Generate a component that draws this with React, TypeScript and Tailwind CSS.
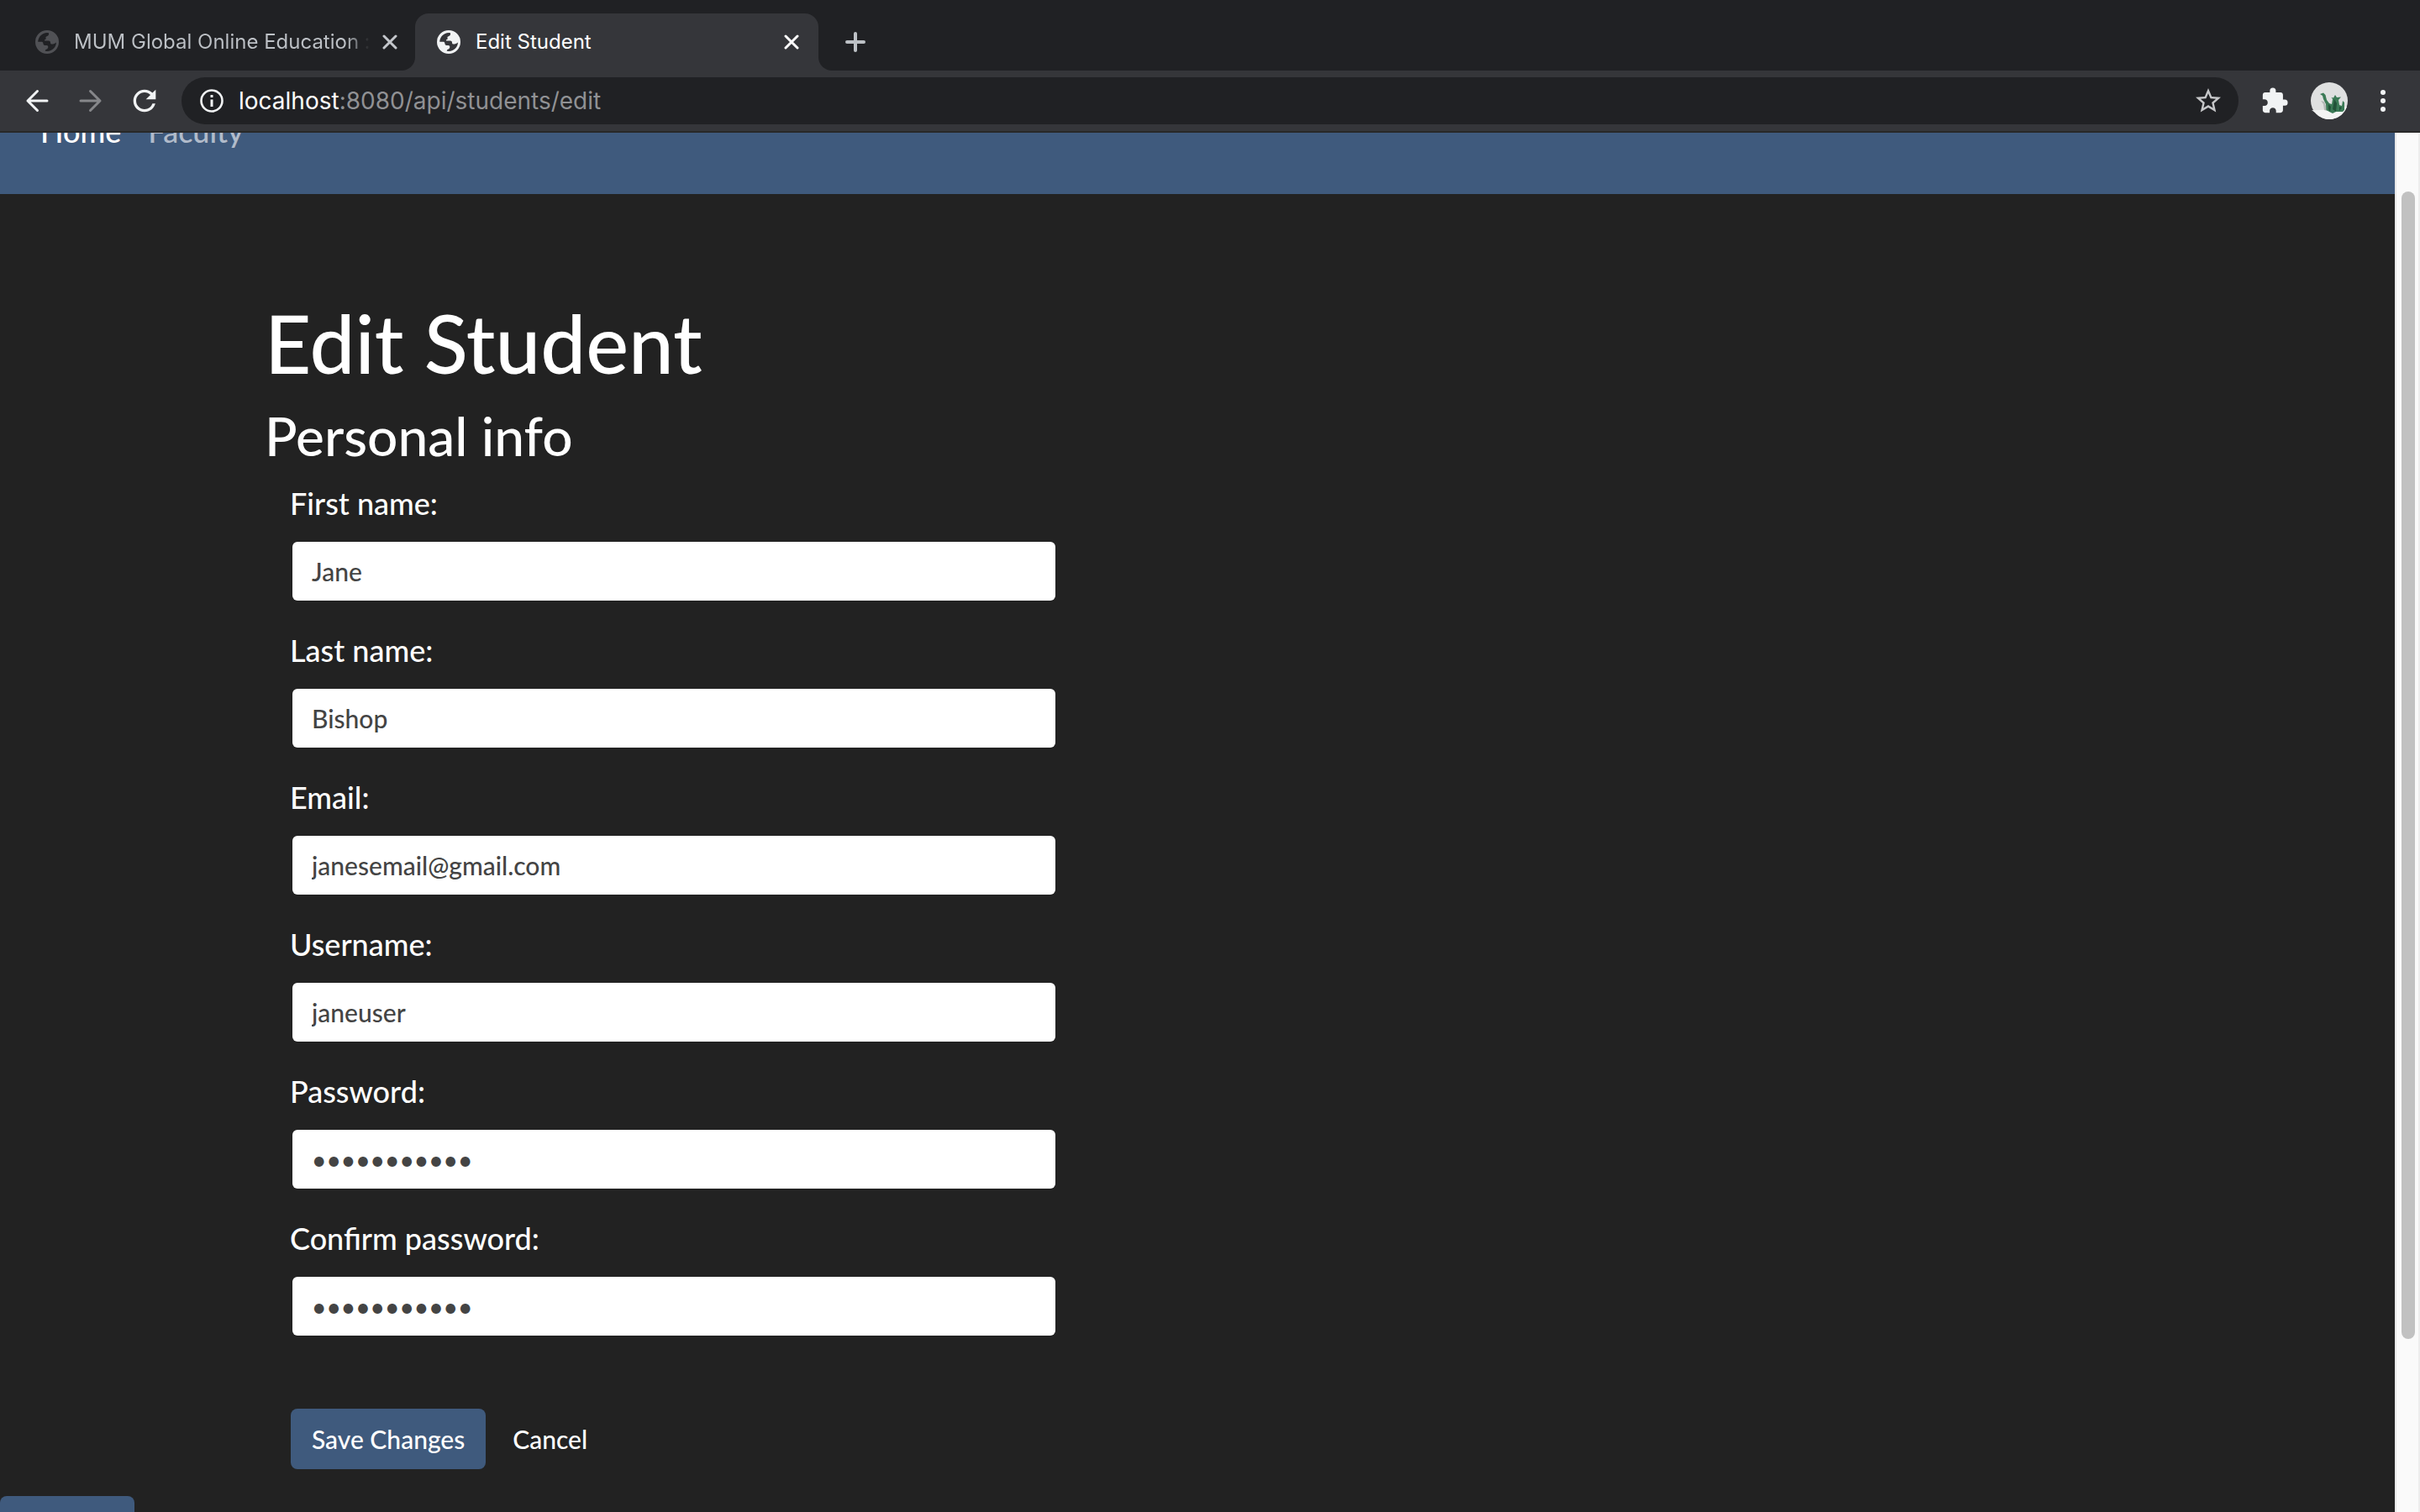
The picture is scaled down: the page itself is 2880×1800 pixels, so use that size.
import React from "react";
import { MdExtension, MdStarBorder, MdRefresh } from "react-icons/md";

const fields = [
  { id: "firstName", label: "First name:", type: "text", value: "Jane" },
  { id: "lastName", label: "Last name:", type: "text", value: "Bishop" },
  { id: "email", label: "Email:", type: "email", value: "janesemail@gmail.com" },
  { id: "username", label: "Username:", type: "text", value: "janeuser" },
  { id: "password", label: "Password:", type: "password", value: "janepasswor" },
  { id: "confirm", label: "Confirm password:", type: "password", value: "janepasswor" },
];

function GlobeIcon({ className }: { className: string }) {
  return (
    <svg viewBox="0 0 28 28" className={className} aria-hidden="true">
      <path
        fill="currentColor"
        fillRule="evenodd"
        d="M14 0a14 14 0 1 0 0 28a14 14 0 1 0 0-28zM16 3.200c.4 2-.4 3.300-1.900 3.800c-1.300.5-1.900 1-1.600 2.200c.2 1 .5 1.600-.7 1.700c-.9.1-1.100.8-.6 1.500h4.600c1.600 0 2.300 1 2.200 2.300c-.1 1.400 1 1.900 2.200 1.800c1.500-.1 2.800-.3 4.800-2c-.2 5.500-4.700 10.400-10.700 10.400l-2.500-.1c0-1.500.7-2 2-2.400c1.400-.5 1.900-2.700 1.200-3.600c-.6-.8-2.200-.6-3.500-.7c-1.500-.1-2-1.200-2.100-2.300c-.1-1.400-.8-2-2.200-2h-4c.3-5.600 4.900-10.700 10.700-10.700z"
      />
    </svg>
  );
}

function CloseIcon({ className }: { className: string }) {
  return (
    <svg viewBox="0 0 18 18" className={className} fill="none" stroke="currentColor" strokeWidth="3" strokeLinecap="round" aria-hidden="true">
      <path d="M2 2L16 16M16 2L2 16" />
    </svg>
  );
}

function Arrow({ className }: { className: string }) {
  return (
    <svg viewBox="0 0 28 28" className={className} fill="none" stroke="currentColor" strokeWidth="3" strokeLinecap="round" strokeLinejoin="round" aria-hidden="true">
      <path d="M26 14H3M14.500 2.500L3 14L14.500 25.500" />
    </svg>
  );
}

function TabStrip() {
  return (
    <div className="flex h-[84px] shrink-0 items-end bg-[#202124]">
      <div className="flex h-[68px] w-[478px] items-center pl-[42px]">
        <GlobeIcon className="size-7 shrink-0 text-[#505155]" />
        <span className="ml-[18px] w-[352px] overflow-hidden whitespace-nowrap bg-gradient-to-r from-[#bdc1c6] from-92% to-transparent bg-clip-text text-[24px] text-transparent">
          MUM Global Online Education :
        </span>
        <button type="button" aria-label="Close MUM Global Online Education" className="ml-[15px] text-[#c4c7cc]">
          <CloseIcon className="size-[18px]" />
        </button>
      </div>
      <div className="size-4 bg-[#35363a]">
        <div className="size-4 rounded-br-2xl bg-[#202124]" />
      </div>
      <div className="flex h-[68px] w-[480px] items-center rounded-t-2xl bg-[#35363a] pr-[23px] pl-[26px] text-white">
        <GlobeIcon className="size-7 shrink-0 text-[#f1f3f4]" />
        <span className="ml-[18px] grow whitespace-nowrap text-[24px]">Edit Student</span>
        <button type="button" aria-label="Close Edit Student">
          <CloseIcon className="size-[18px]" />
        </button>
      </div>
      <div className="size-4 bg-[#35363a]">
        <div className="size-4 rounded-bl-2xl bg-[#202124]" />
      </div>
      <button type="button" aria-label="New tab" className="ml-4 flex h-[68px] items-center text-[#bdc1c6]">
        <svg viewBox="0 0 24 24" className="size-6" fill="none" stroke="currentColor" strokeWidth="4" strokeLinecap="round" aria-hidden="true">
          <path d="M12 2V22M2 12H22" />
        </svg>
      </button>
    </div>
  );
}

function Toolbar() {
  return (
    <div className="flex h-[74px] shrink-0 items-center border-b-2 border-[#282828] bg-[#35363a] pr-[41px] pl-[30px] text-[#f1f3f4]">
      <button type="button" aria-label="Back">
        <Arrow className="size-7" />
      </button>
      <button type="button" aria-label="Forward" className="ml-9 text-[#86878a]">
        <Arrow className="size-7 rotate-180" />
      </button>
      <button type="button" aria-label="Reload" className="ml-[30px]">
        <MdRefresh className="size-10" />
      </button>
      <div className="ml-6 flex h-14 min-w-0 grow items-center rounded-full bg-[#202124] pr-[18px] pl-[22px]">
        <svg viewBox="0 0 28 28" className="size-7 shrink-0" fill="none" stroke="currentColor" aria-hidden="true">
          <circle cx="14" cy="14" r="12.500" strokeWidth="2.600" />
          <path d="M14 12.500V21M14 7V10" strokeWidth="3" />
        </svg>
        <div className="ml-[18px] grow text-[28px] text-[#909194]">
          <span className="text-white">localhost</span>:8080/api/students/edit
        </div>
        <button type="button" aria-label="Bookmark this tab" className="text-[#c6c7c9]">
          <MdStarBorder className="size-9" />
        </button>
      </div>
      <button type="button" aria-label="Extensions" className="ml-[26px]">
        <MdExtension className="size-[34px]" />
      </button>
      <button type="button" aria-label="Profile" className="ml-[26px]">
        <svg viewBox="0 0 44 44" className="size-11" aria-hidden="true">
          <circle cx="22" cy="22" r="22" fill="#dfe0e0" />
          <path d="M1 33C12 34 30 31 43 29A22 22 0 0 1 5 36z" fill="#f4f4f4" />
          <path d="M12 22l4 1 2 5 2 6-4-1-1-7z" fill="#b4b8b6" />
          <path d="M11 14L15 12.500L17.500 15L19 21L22 25L25 26L26 20L24.500 18L27 18.500L29 15L31 18L36 17.500L33 21L34 27L37 28L38 22L40 24L40 33L38 35L30 35L26 37L22 35L18.500 33L18 26L15 20L14 16z" fill="#3b7a56" />
          <path d="M28 20l3 5-1 10-4-3zM21 26l3 3-1 6-2-3zM34 29l3 1-3 4z" fill="#225239" />
        </svg>
      </button>
      <button type="button" aria-label="Menu" className="ml-[39px]">
        <svg viewBox="0 0 6 26" className="h-[26px] w-[6px]" fill="currentColor" aria-hidden="true">
          <circle cx="3" cy="3" r="3" />
          <circle cx="3" cy="13" r="3" />
          <circle cx="3" cy="23" r="3" />
        </svg>
      </button>
    </div>
  );
}

export default function App() {
  return (
    <div className="flex h-screen flex-col overflow-hidden bg-[#222222] font-['Inter',sans-serif]">
      <TabStrip />
      <Toolbar />
      <div className="flex min-h-0 grow font-['Lato',sans-serif] font-medium text-white">
        <main className="flex min-w-0 grow flex-col overflow-hidden">
          <nav className="flex h-[73px] shrink-0 flex-col justify-end overflow-hidden bg-[#3f5a7d] pb-[51px] pl-12">
            <div className="flex gap-8 text-[36px] leading-[48px]">
              <a href="#home">Home</a>
              <a href="#faculty" className="text-white/60">Faculty</a>
            </div>
          </nav>
          <form className="flex flex-col pt-[119px] pl-[315px]">
            <h1 className="text-[96px] leading-[116px]">Edit Student</h1>
            <h2 className="mt-[15px] text-[64px] leading-[76px]">Personal info</h2>
            <div className="mt-[15px] flex w-[941px] flex-col gap-8 pl-[33px]">
              {fields.map((f) => (
                <div key={f.id} className="flex flex-col gap-[19px]">
                  <label htmlFor={f.id} className="-ml-[3px] text-[36px] leading-[54px]">
                    {f.label}
                  </label>
                  <input
                    id={f.id}
                    type={f.type}
                    defaultValue={f.value}
                    className="h-[70px] w-full rounded-md bg-white px-[23px] text-[30px] text-[#444444] outline-none"
                  />
                </div>
              ))}
            </div>
            <div className="mt-[87px] flex h-[72px] pl-[31px]">
              <button type="submit" className="rounded-lg bg-[#3f5a7d] px-[25px] text-[30px]">Save Changes</button>
              <a href="#cancel" className="px-8 text-[30px] leading-[72px]">Cancel</a>
            </div>
          </form>
          <button type="button" aria-label="Back to list" className="mt-8 h-[72px] w-40 shrink-0 rounded-lg bg-[#3f5a7d]" />
        </main>
        <div className="w-[30px] shrink-0 border-r-2 border-l-2 border-r-[#ededed] border-l-[#e8e8e8] bg-[#fafafa] pt-[70px] pr-1 pl-1.5">
          <div className="h-[1366px] rounded-full bg-[#c1c1c1]" />
        </div>
      </div>
    </div>
  );
}
